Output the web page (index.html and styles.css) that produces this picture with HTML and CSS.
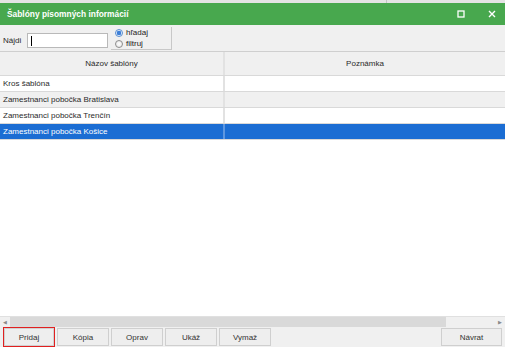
FILE: index.html
```
<!DOCTYPE html>
<html lang="sk">
<head>
    <meta charset="UTF-8">
    <title>Šablóny písomných informácií</title>
    <link rel="stylesheet" href="styles.css">
</head>
<body>

    <div class="topstrip"><span class="topstrip-split"></span></div>

    <div class="titlebar">
        <span class="title">Šablóny písomných informácií</span>
        <div class="win-buttons">
            <svg width="8" height="8" viewBox="0 0 8 8"><rect x="1" y="1" width="6" height="6" fill="none" stroke="#fff" stroke-width="1.3"/></svg>
            <svg width="8" height="8" viewBox="0 0 8 8"><path d="M1 1 L7 7 M7 1 L1 7" stroke="#fff" stroke-width="1.4"/></svg>
        </div>
    </div>

    <!-- search bar -->
    <div class="toolbar">
        <label class="find-label">Nájdi</label>
        <div class="find-input"><span class="caret"></span></div>
        <div class="mode-box">
            <div class="radio-row"><span class="radio checked"></span>hľadaj</div>
            <div class="radio-row"><span class="radio"></span>filtruj</div>
        </div>
    </div>

    <div class="grid">
        <div class="grid-row grid-head">
            <div class="cell col-name">Názov šablóny</div>
            <div class="cell col-note">Poznámka</div>
        </div>
        <div id="gridBody"></div>
    </div>

    <div class="hscroll">
        <span class="arrow">&#9664;</span>
        <span class="thumb"></span>
        <span class="track"></span>
        <span class="arrow">&#9654;</span>
    </div>

    <div class="buttons">
        <button class="active">Pridaj</button>
        <button>Kópia</button>
        <button>Oprav</button>
        <button>Ukáž</button>
        <button>Vymaž</button>
        <span class="spacer"></span>
        <button class="back">Návrat</button>
    </div>

    <script>
        const templates = [
            'Kros šablóna',
            'Zamestnanci pobočka Bratislava',
            'Zamestnanci pobočka Trenčín',
            'Zamestnanci pobočka Košice'
        ];
        const selected = 3;

        const gridBody = document.getElementById('gridBody');
        templates.forEach((name, i) => {
            const row = document.createElement('div');
            row.className = 'grid-row' + (i % 2 ? ' alt' : '') + (i === selected ? ' selected' : '');
            row.innerHTML = `
                <div class="cell col-name">${name}</div>
                <div class="cell col-note"></div>
            `;
            gridBody.appendChild(row);
        });
    </script>

</body>
</html>
```

FILE: styles.css
```
    body {
        margin: 0;
        width: 505px;
        height: 347px;
        display: flex;
        flex-direction: column;
        background-color: #f0f0f0;
        font-family: 'Liberation Sans', Arial, sans-serif;
        font-size: 8px;
        color: #2a2a2a;
        overflow: hidden;
    }

    .topstrip {
        height: 3px;
        background-color: #e4e4e4;
        display: flex;
    }

    .topstrip-split {
        width: 386px;
        border-right: 1px solid #c4c4c4;
    }

    .titlebar {
        height: 22px;
        background-color: #48a84e;
        display: flex;
        align-items: center;
        justify-content: space-between;
        padding-left: 7px;
    }

    .title {
        color: #ffffff;
        font-weight: bold;
        font-size: 8.4px;
    }

    .win-buttons {
        display: flex;
        gap: 23px;
        padding-right: 9px;
    }

    .win-buttons svg {
        display: block;
    }

    .toolbar {
        height: 27px;
        border-bottom: 1px solid #cfcfcf;
        display: flex;
        align-items: flex-end;
        padding-bottom: 3px;
        box-sizing: border-box;
    }

    .find-label {
        width: 24px;
        padding-left: 3px;
        margin-bottom: 3px;
    }

    .find-input {
        width: 76px;
        height: 13px;
        background-color: #ffffff;
        border: 1px solid #b9b9b9;
        display: flex;
        align-items: center;
        padding-left: 3px;
        box-sizing: content-box;
    }

    .caret {
        width: 1px;
        height: 10px;
        background-color: #000000;
    }

    .mode-box {
        width: 56px;
        height: 22px;
        margin-left: 3px;
        padding-left: 4px;
        border-right: 1px solid #c8c8c8;
        border-bottom: 1px solid #c8c8c8;
        display: flex;
        flex-direction: column;
        justify-content: center;
        gap: 1px;
        align-self: flex-end;
        margin-bottom: -2px;
    }

    .radio-row {
        display: flex;
        align-items: center;
        gap: 3px;
        height: 10px;
        color: #222222;
    }

    .radio {
        width: 8px;
        height: 8px;
        border-radius: 50%;
        border: 1px solid #8d8d8d;
        background: radial-gradient(#ffffff, #e2e2e2);
        box-sizing: border-box;
    }

    .radio.checked {
        border-color: #5b8fd0;
        background: radial-gradient(circle, #3d7fd8 0, #3d7fd8 2px, #dce9f8 2.5px);
    }

    .grid {
        flex: 1;
        background-color: #ffffff;
        border-bottom: 1px solid #e0e0e0;
    }

    .grid-row {
        display: flex;
        height: 15px;
        border-bottom: 1px solid #d9d9d9;
        background-color: #ffffff;
    }

    .grid-row.alt {
        background-color: #f0f0f0;
    }

    .grid-row.selected {
        background-color: #1b6dd3;
        color: #ffffff;
    }

    .grid-head {
        height: 23px;
        background-color: #f0f0f0;
    }

    .cell {
        display: flex;
        align-items: center;
        padding-left: 3px;
        white-space: nowrap;
    }

    .col-name {
        width: 220px;
        border-right: 2px solid #e2e2e2;
    }

    .col-note {
        flex: 1;
    }

    .grid-row.selected .col-name {
        border-right-color: #5e97e0;
    }

    .grid-head .cell {
        justify-content: center;
        padding-left: 0;
    }

    .grid-head .col-name {
        width: 223px;
    }

    .hscroll {
        height: 10px;
        display: flex;
        align-items: stretch;
        background-color: #f0f0f0;
    }

    .hscroll .arrow {
        width: 10px;
        font-size: 5px;
        color: #8a8a8a;
        display: flex;
        align-items: center;
        justify-content: center;
    }

    .thumb {
        width: 436px;
        background-color: #d9d9d9;
    }

    .track {
        flex: 1;
    }

    .buttons {
        height: 20px;
        display: flex;
        align-items: center;
        padding: 0 3px;
        gap: 2px;
    }

    .buttons button {
        width: 52px;
        height: 18px;
        padding: 0;
        font-family: 'Liberation Sans', Arial, sans-serif;
        font-size: 8px;
        color: #333333;
        background-color: #eeeeee;
        border: 1px solid #cfcfcf;
        border-radius: 0;
    }

    .buttons button.active {
        border: 1px solid #e02020;
        box-shadow: inset 0 0 0 1px #d0d0d0;
        height: 20px;
    }

    .buttons button.back {
        width: 61px;
    }

    .spacer {
        flex: 1;
    }
```
